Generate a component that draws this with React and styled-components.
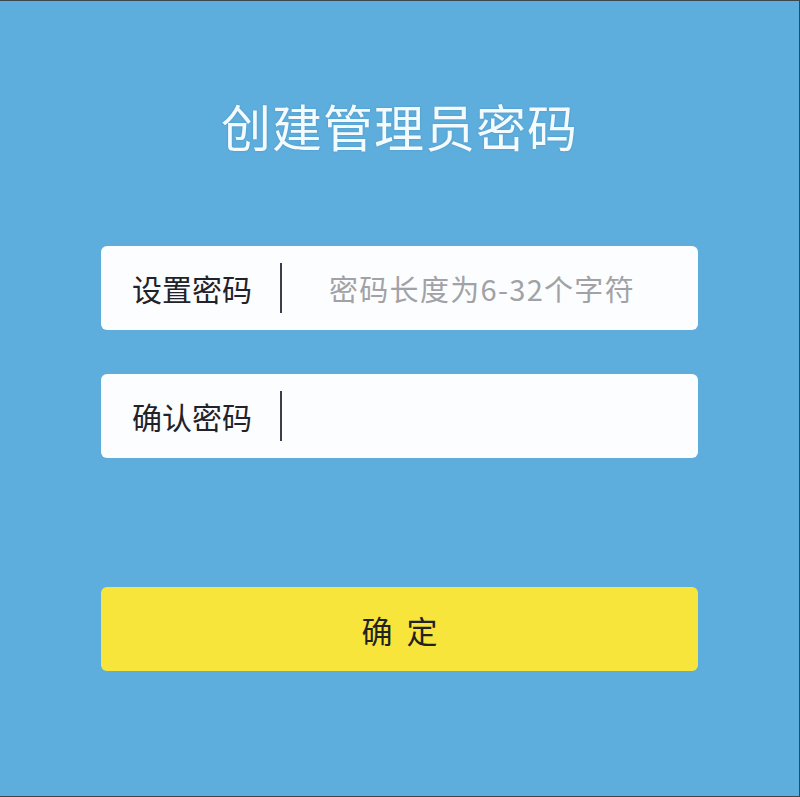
import React from "react";
import styled, { createGlobalStyle } from "styled-components";

const Global = createGlobalStyle`
  html, body { margin: 0; padding: 0; }
  body {
    background: #5eaedd;
    font-family: "Noto Sans CJK SC", "Noto Sans", sans-serif;
  }
  * { box-sizing: border-box; }
`;

const Page = styled.div`
  width: 800px;
  height: 797px;
  background: #5eaedd;
  border-top: 1px solid #3b4650;
  border-right: 1px solid #3b4650;
  border-bottom: 1px solid #3b4650;
  display: flex;
  flex-direction: column;
  align-items: center;
`;

const Title = styled.h1`
  margin: 88px 0 0;
  font-size: 50px;
  line-height: 72px;
  font-weight: 400;
  color: #f4fbff;
  letter-spacing: 1px;
  text-shadow: 0 0 2px rgba(40, 90, 130, 0.35);
`;

const Form = styled.form`
  width: 597px;
  margin: 85px 0 0 0;
  display: flex;
  flex-direction: column;
`;

const Field = styled.label`
  height: 84px;
  background: #fcfdff;
  border-radius: 6px;
  display: flex;
  align-items: center;
  padding-left: 31px;
  margin-bottom: ${(p) => p.$gap || 0}px;
`;

const Label = styled.span`
  font-size: 30px;
  color: #222228;
  white-space: nowrap;
`;

const Divider = styled.span`
  width: 2px;
  height: 50px;
  background: #3c3c4a;
  margin-left: 28px;
  flex: none;
`;

const Input = styled.input`
  flex: 1;
  min-width: 0;
  border: none;
  outline: none;
  background: transparent;
  padding: 0 0 0 47px;
  font-family: "Noto Sans CJK SC", "Noto Sans", sans-serif;
  font-size: 29px;
  letter-spacing: 1.3px;
  color: #222;
  &::placeholder {
    color: #a2a2a6;
  }
`;

const Button = styled.button`
  margin-top: 129px;
  height: 84px;
  border: none;
  border-radius: 6px;
  background: #f8e53b;
  font-family: "Noto Sans CJK SC", "Noto Sans", sans-serif;
  font-size: 31px;
  color: #222;
  letter-spacing: 14px;
  text-indent: 14px;
  cursor: pointer;
`;

export default function App() {
  return (
    <>
      <Global />
      <Page>
        <Title>创建管理员密码</Title>
        <Form onSubmit={(e) => e.preventDefault()}>
          <Field $gap={44}>
            <Label>设置密码</Label>
            <Divider />
            <Input type="password" placeholder="密码长度为6-32个字符" />
          </Field>
          <Field>
            <Label>确认密码</Label>
            <Divider />
            <Input type="password" />
          </Field>
          <Button type="submit">确定</Button>
        </Form>
      </Page>
    </>
  );
}
